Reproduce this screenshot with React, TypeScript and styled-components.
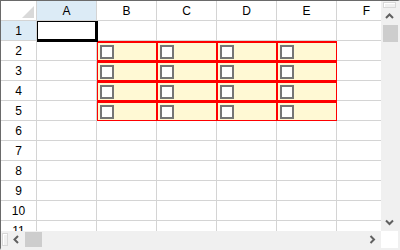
import React from 'react';
import styled, { createGlobalStyle } from 'styled-components';

const GlobalStyle = createGlobalStyle`
  html, body {
    margin: 0;
    padding: 0;
    background: #ffffff;
  }
  * {
    box-sizing: border-box;
  }
`;

const grid = '#d4d4d4';
const track = '#f0f0f0';
const arrow = '#606060';

const Frame = styled.div`
  width: 400px;
  height: 250px;
  display: flex;
  flex-direction: column;
  border-top: 1px solid #6a6a6a;
  border-left: 1px solid #6a6a6a;
  border-right: 2px solid #f0f0f0;
  border-bottom: 2px solid #f0f0f0;
  background: #ffffff;
  font-family: 'Liberation Sans', Arial, sans-serif;
  user-select: none;
`;

const Upper = styled.div`
  display: flex;
  flex-direction: row;
  height: 230px;
`;

const Lower = styled.div`
  display: flex;
  flex-direction: row;
  height: 17px;
`;

const Viewport = styled.div`
  position: relative;
  width: 380px;
  height: 230px;
  overflow: hidden;
`;

const Sheet = styled.div`
  display: grid;
  grid-template-columns: 36px repeat(6, 60px);
  grid-auto-rows: 20px;
`;

const Cell = styled.div<{ marked?: boolean }>`
  display: flex;
  align-items: center;
  border-right: 1px solid ${(p) => (p.marked ? '#ff0000' : grid)};
  border-bottom: 1px solid ${(p) => (p.marked ? '#ff0000' : grid)};
  ${(p) =>
    p.marked &&
    `
  background: #fff9d4;
  box-shadow: inset 1px 2px 0 0 #ff0000;
  padding: 2px 0 0 3px;
  `}
`;

const Head = styled.div<{ active?: boolean }>`
  display: flex;
  align-items: center;
  justify-content: center;
  border-right: 1px solid ${grid};
  border-bottom: 1px solid ${grid};
  background: ${(p) => (p.active ? '#dcebf6' : '#ffffff')};
  font-size: 12px;
  color: #000000;
  padding-top: 1px;
`;

const Corner = styled.div`
  position: relative;
  border-right: 1px solid ${grid};
  border-bottom: 1px solid ${grid};
  &::after {
    content: '';
    position: absolute;
    right: 2px;
    bottom: 2px;
    width: 0;
    height: 0;
    border-left: 12px solid transparent;
    border-bottom: 12px solid #d9d9d9;
  }
`;

const Check = styled.span`
  display: block;
  flex-shrink: 0;
  width: 14px;
  height: 14px;
  background: #ffffff;
  border: 2px solid #767676;
`;

const Selection = styled.div`
  position: absolute;
  left: 36px;
  top: 20px;
  width: 61px;
  height: 21px;
  border-style: solid;
  border-color: #000000;
  border-width: 1px 3px 3px 1px;
  pointer-events: none;
`;

const VScroll = styled.div`
  width: 17px;
  height: 230px;
  background: ${track};
  display: flex;
  flex-direction: column;
  align-items: center;
  padding-top: 1px;
`;

const HScroll = styled.div`
  width: 380px;
  height: 17px;
  background: ${track};
  display: flex;
  flex-direction: row;
  align-items: center;
  padding-left: 1px;
`;

const ScrollCorner = styled.div`
  width: 17px;
  height: 17px;
  background: #ffffff;
`;

const Splitter = styled.div<{ vertical?: boolean }>`
  flex-shrink: 0;
  background: ${track};
  border: 1px solid #d8d8d8;
  box-shadow: inset 1px 1px 0 #ffffff;
  ${(p) =>
    p.vertical
      ? `
  width: 13px;
  height: 6px;
  `
      : `
  width: 6px;
  height: 13px;
  `}
`;

const ArrowBox = styled.div`
  flex-shrink: 0;
  display: flex;
  align-items: center;
  justify-content: center;
  width: 17px;
  height: 17px;
`;

const VThumb = styled.div`
  width: 15px;
  height: 17px;
  margin-left: 1px;
  background: #cdcdcd;
  flex-shrink: 0;
`;

const HThumb = styled.div`
  width: 17px;
  height: 15px;
  background: #cdcdcd;
  flex-shrink: 0;
`;

const Spacer = styled.div`
  flex: 1;
`;

const Chevron: React.FC<{ dir: 'up' | 'down' | 'left' | 'right' }> = ({ dir }) => {
  const pts = {
    up: '1,6 4.5,2.5 8,6',
    down: '1,2.5 4.5,6 8,2.5',
    left: '6,1 2.5,4.5 6,8',
    right: '2.5,1 6,4.5 2.5,8',
  }[dir];
  return (
    <svg width="9" height="9" viewBox="0 0 9 9">
      <polyline points={pts} fill="none" stroke={arrow} strokeWidth="2" />
    </svg>
  );
};

const columns = ['A', 'B', 'C', 'D', 'E', 'F'];
const rows = [1, 2, 3, 4, 5, 6, 7, 8, 9, 10, 11];

const isMarked = (r: number, c: number) => r >= 2 && r <= 5 && c >= 1 && c <= 4;

export default function App() {
  return (
    <>
      <GlobalStyle />
      <Frame>
        <Upper>
          <Viewport>
            <Sheet>
              <Corner />
              {columns.map((c, i) => (
                <Head key={c} active={i === 0}>
                  {c}
                </Head>
              ))}
              {rows.map((r) => (
                <React.Fragment key={r}>
                  <Head active={r === 1}>{r}</Head>
                  {columns.map((c, ci) => {
                    const marked = isMarked(r, ci);
                    return (
                      <Cell key={c} marked={marked}>
                        {marked && <Check />}
                      </Cell>
                    );
                  })}
                </React.Fragment>
              ))}
            </Sheet>
            <Selection />
          </Viewport>
          <VScroll>
            <Splitter vertical />
            <ArrowBox>
              <Chevron dir="up" />
            </ArrowBox>
            <VThumb />
            <Spacer />
            <ArrowBox>
              <Chevron dir="down" />
            </ArrowBox>
          </VScroll>
        </Upper>
        <Lower>
          <HScroll>
            <Splitter />
            <ArrowBox>
              <Chevron dir="left" />
            </ArrowBox>
            <HThumb />
            <Spacer />
            <ArrowBox>
              <Chevron dir="right" />
            </ArrowBox>
          </HScroll>
          <ScrollCorner />
        </Lower>
      </Frame>
    </>
  );
}
